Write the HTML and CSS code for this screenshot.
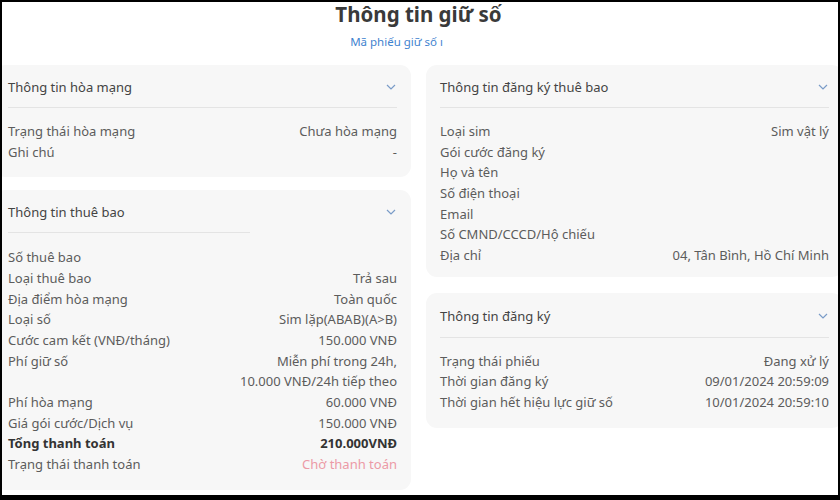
FILE: index.html
```html
<!DOCTYPE html>
<html lang="vi">
<head>
<meta charset="utf-8">
<link rel="stylesheet" href="styles.css">
</head>
<body>
<div class="frame">
  <div class="page">
    <h1 class="title">Thông tin giữ số</h1>
    <div class="code">Mã phiếu giữ số <span class="cur">ı</span></div>
    <div class="grid">
      <div class="col">
        <section class="card c1">
          <div class="head"><span>Thông tin hòa mạng</span><svg class="chev" viewBox="0 0 10 6"><path d="M1 1l4 4 4-4"/></svg></div>
          <div class="rows">
            <div class="row"><span>Trạng thái hòa mạng</span><span>Chưa hòa mạng</span></div>
            <div class="row"><span>Ghi chú</span><span>-</span></div>
          </div>
        </section>
        <section class="card c2">
          <div class="head short"><span>Thông tin thuê bao</span><svg class="chev" viewBox="0 0 10 6"><path d="M1 1l4 4 4-4"/></svg></div>
          <div class="rows">
            <div class="row"><span>Số thuê bao</span><span></span></div>
            <div class="row"><span>Loại thuê bao</span><span>Trả sau</span></div>
            <div class="row"><span>Địa điểm hòa mạng</span><span>Toàn quốc</span></div>
            <div class="row"><span>Loại số</span><span>Sim lặp(ABAB)(A&gt;B)</span></div>
            <div class="row"><span>Cước cam kết (VNĐ/tháng)</span><span>150.000 VNĐ</span></div>
            <div class="row"><span>Phí giữ số</span><span class="multi">Miễn phí trong 24h,<br>10.000 VNĐ/24h tiếp theo</span></div>
            <div class="row"><span>Phí hòa mạng</span><span>60.000 VNĐ</span></div>
            <div class="row"><span>Giá gói cước/Dịch vụ</span><span>150.000 VNĐ</span></div>
            <div class="row total"><span>Tổng thanh toán</span><span>210.000VNĐ</span></div>
            <div class="row"><span>Trạng thái thanh toán</span><span class="pending">Chờ thanh toán</span></div>
          </div>
        </section>
      </div>
      <div class="col">
        <section class="card c3">
          <div class="head"><span>Thông tin đăng ký thuê bao</span><svg class="chev" viewBox="0 0 10 6"><path d="M1 1l4 4 4-4"/></svg></div>
          <div class="rows">
            <div class="row"><span>Loại sim</span><span>Sim vật lý</span></div>
            <div class="row"><span>Gói cước đăng ký</span><span></span></div>
            <div class="row"><span>Họ và tên</span><span></span></div>
            <div class="row"><span>Số điện thoại</span><span></span></div>
            <div class="row"><span>Email</span><span></span></div>
            <div class="row"><span>Số CMND/CCCD/Hộ chiếu</span><span></span></div>
            <div class="row"><span>Địa chỉ</span><span>04, Tân Bình, Hồ Chí Minh</span></div>
          </div>
        </section>
        <section class="card c4">
          <div class="head"><span>Thông tin đăng ký</span><svg class="chev" viewBox="0 0 10 6"><path d="M1 1l4 4 4-4"/></svg></div>
          <div class="rows">
            <div class="row"><span>Trạng thái phiếu</span><span>Đang xử lý</span></div>
            <div class="row"><span>Thời gian đăng ký</span><span>09/01/2024 20:59:09</span></div>
            <div class="row"><span>Thời gian hết hiệu lực giữ số</span><span>10/01/2024 20:59:10</span></div>
          </div>
        </section>
      </div>
    </div>
  </div>
</div>
</body>
</html>
```
FILE: styles.css
```css
* { box-sizing: border-box; }
html, body { margin: 0; padding: 0; background: #fff; }
body { font-family: "Noto Sans", "Open Sans", sans-serif; color: #555; }
.frame {
  width: 840px;
  height: 500px;
  border-style: solid;
  border-color: #000;
  border-width: 2px 2px 5px 2px;
  overflow: hidden;
  background: #fff;
}
.page {
  width: 849px;
  margin-left: -8px;
}
.title {
  margin: -3px 0 0;
  text-align: center;
  font-size: 20.5px;
  line-height: 30px;
  font-weight: 700;
  color: #3a3a3a;
}
.code {
  margin-top: 5px;
  padding-right: 44px;
  text-align: center;
  font-size: 11.5px;
  line-height: 16px;
  color: #3f83cf;
}
.cur { font-size: 11px; }
.grid {
  margin-top: 15px;
  display: grid;
  grid-template-columns: 417px 417px;
  column-gap: 15px;
  align-items: start;
}
.col { display: flex; flex-direction: column; gap: 13px; }
.card {
  background: #f7f7f7;
  border-radius: 11px;
  padding: 0 14px 15px;
}
.c3 { padding-bottom: 11px; }
.c4 { margin-top: 3px; }
.head {
  height: 43px;
  display: flex;
  align-items: center;
  justify-content: space-between;
  border-bottom: 1px solid #e4e4e4;
  font-size: 13px;
  color: #444;
  padding-top: 1px;
}
.c4 .head { height: 45px; padding-top: 3px; }
.head.short { border-bottom: none; position: relative; }
.head.short::after {
  content: "";
  position: absolute;
  left: 0;
  bottom: 0;
  width: 242px;
  border-bottom: 1px solid #e4e4e4;
}
.chev {
  width: 10px;
  height: 6px;
  margin-right: 1px;
  fill: none;
  stroke: #7a9cc8;
  stroke-width: 1.2;
}
.rows { padding-top: 13px; }
.c2 .rows { padding-top: 14px; }
.row {
  display: flex;
  justify-content: space-between;
  font-size: 13px;
  line-height: 20.67px;
  color: #5c5c5c;
}
.row span:last-child { text-align: right; }
.total { font-weight: 700; color: #333; }
.pending { color: #ec9aa6; }
```
